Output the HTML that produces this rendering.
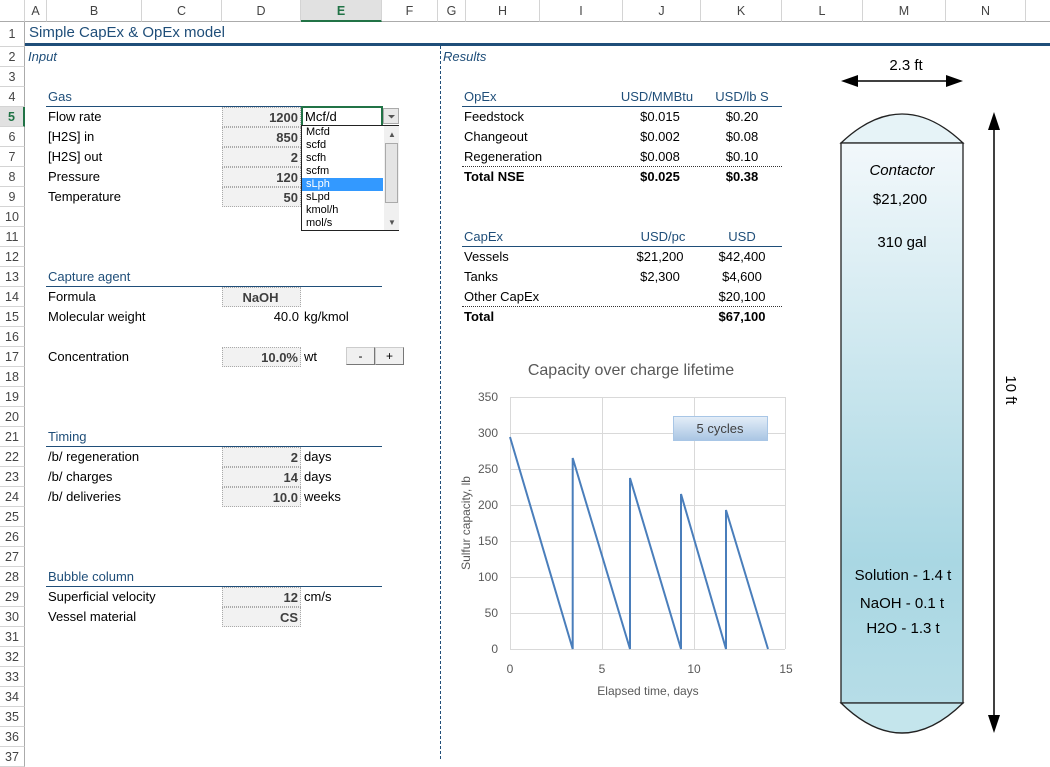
<!DOCTYPE html>
<html><head><meta charset="utf-8"><style>
*{margin:0;padding:0;box-sizing:border-box}
body{width:1050px;height:759px;overflow:hidden;background:#fff;font-family:"Liberation Sans",sans-serif;font-size:13px;color:#000;position:relative}
.a{position:absolute;white-space:nowrap}
.ch{position:absolute;top:0;height:22px;line-height:22px;text-align:center;color:#444;font-size:12.5px;border-right:1px solid #d4d4d4;border-bottom:1px solid #ababab;background:#fff}
.rh{position:absolute;left:0;width:25px;height:20px;line-height:20px;text-align:center;color:#444;font-size:12.5px;border-bottom:1px solid #d4d4d4;border-right:1px solid #ababab;background:#fff}
.t{position:absolute;height:20px;line-height:20px;white-space:nowrap}
.in{position:absolute;left:222px;width:79px;height:20px;line-height:20px;background:#f2f2f2;border:1px dotted #aaa;text-align:right;padding-right:2px;font-weight:bold;color:#3f3f3f}
.sec{color:#1f4e79;border-bottom:1px solid #1f4e79}
.c{text-align:center}
</style></head><body>
<!-- column headers -->
<div class="ch" style="left:0;width:25px;background:#fff"></div>
<div class="ch" style="left:25px;width:22px">A</div>
<div class="ch" style="left:47px;width:95px">B</div>
<div class="ch" style="left:142px;width:80px">C</div>
<div class="ch" style="left:222px;width:79px">D</div>
<div class="ch" style="left:301px;width:81px;background:#e1e1e1;color:#217346;font-weight:bold;border-bottom:2px solid #217346">E</div>
<div class="ch" style="left:382px;width:56px">F</div>
<div class="ch" style="left:438px;width:28px">G</div>
<div class="ch" style="left:466px;width:74px">H</div>
<div class="ch" style="left:540px;width:83px">I</div>
<div class="ch" style="left:623px;width:78px">J</div>
<div class="ch" style="left:701px;width:81px">K</div>
<div class="ch" style="left:782px;width:81px">L</div>
<div class="ch" style="left:863px;width:83px">M</div>
<div class="ch" style="left:946px;width:80px">N</div>
<div class="ch" style="left:1026px;width:24px;border-right:none"></div>
<!-- row headers -->
<div class="rh" style="top:22px;height:25px;line-height:24px">1</div>
<div id="rows"></div>
<script>
var h='';for(var n=2;n<=37;n++){var s=n==5?'background:#e1e1e1;color:#217346;font-weight:bold;border-right:2px solid #217346;':'';h+='<div class="rh" style="top:'+(7+20*n)+'px;'+s+'">'+n+'</div>';}document.getElementById('rows').innerHTML=h;
</script>
<!-- title -->
<div class="a" style="left:29px;top:24px;font-size:15px;color:#1f4e79">Simple CapEx &amp; OpEx model</div>
<div class="a" style="left:25px;top:43px;width:1025px;height:3px;background:#1f4e79"></div>
<div class="a" style="left:440px;top:46px;height:713px;border-left:1.5px dashed #1f4e79"></div>
<div class="t" style="left:28px;top:47px;font-style:italic;color:#1f4e79">Input</div>
<div class="t" style="left:443px;top:47px;font-style:italic;color:#1f4e79">Results</div>

<!-- Input section -->
<div class="t sec" style="left:46px;top:87px;width:336px;padding-left:2px">Gas</div>
<div class="t" style="left:48px;top:107px">Flow rate</div>
<div class="in" style="top:107px">1200</div>
<div class="t" style="left:301px;top:106px;width:82px;height:21px;border:2px solid #217346;padding-left:2px;line-height:18px">Mcf/d</div>
<div class="a" style="left:383px;top:108px;width:16px;height:16px;background:#e8e8e8;border:1px solid #aaa"><svg width="14" height="14" style="position:absolute;left:0;top:0"><path d="M4 6h7l-3.5 3.5z" fill="#555"/></svg></div>
<div class="t" style="left:48px;top:127px">[H2S] in</div><div class="in" style="top:127px">850</div>
<div class="t" style="left:48px;top:147px">[H2S] out</div><div class="in" style="top:147px">2</div>
<div class="t" style="left:48px;top:167px">Pressure</div><div class="in" style="top:167px">120</div>
<div class="t" style="left:48px;top:187px">Temperature</div><div class="in" style="top:187px">50</div>
<!-- dropdown -->
<div class="a" style="left:301px;top:125px;width:98px;height:106px;background:#fff;border:1px solid #222;font-size:11px;line-height:13px">
<div style="padding-left:4px;width:81px">Mcfd</div>
<div style="padding-left:4px;width:81px">scfd</div>
<div style="padding-left:4px;width:81px">scfh</div>
<div style="padding-left:4px;width:81px">scfm</div>
<div style="padding-left:4px;width:81px;background:#3399ff;color:#fff">sLph</div>
<div style="padding-left:4px;width:81px">sLpd</div>
<div style="padding-left:4px;width:81px">kmol/h</div>
<div style="padding-left:4px;width:81px">mol/s</div>
<div class="a" style="left:82px;top:0;width:15px;height:104px;background:#f0f0f0"></div>
<div class="a" style="left:83px;top:17px;width:13px;height:60px;background:#e4e4e4;border:1px solid #aaa"></div>
<div class="a" style="left:86px;top:2px;font-size:8px;color:#555">▲</div>
<div class="a" style="left:86px;top:90px;font-size:8px;color:#555">▼</div>
</div>

<div class="t sec" style="left:46px;top:267px;width:336px;padding-left:2px">Capture agent</div>
<div class="t" style="left:48px;top:287px">Formula</div><div class="in c" style="top:287px;text-align:center">NaOH</div>
<div class="t" style="left:48px;top:307px">Molecular weight</div>
<div class="t" style="left:222px;top:307px;width:79px;text-align:right;padding-right:2px">40.0</div>
<div class="t" style="left:304px;top:307px">kg/kmol</div>
<div class="t" style="left:48px;top:347px">Concentration</div><div class="in" style="top:347px">10.0%</div>
<div class="t" style="left:304px;top:347px">wt</div>
<div class="a" style="left:346px;top:347px;width:29px;height:18px;background:#f0f0f0;border:1px solid #ccc;border-right-color:#777;border-bottom-color:#777;text-align:center;line-height:16px;font-size:12px">-</div>
<div class="a" style="left:375px;top:347px;width:29px;height:18px;background:#f0f0f0;border:1px solid #ccc;border-right-color:#777;border-bottom-color:#777;text-align:center;line-height:16px;font-size:12px">+</div>

<div class="t sec" style="left:46px;top:427px;width:336px;padding-left:2px">Timing</div>
<div class="t" style="left:48px;top:447px">/b/ regeneration</div><div class="in" style="top:447px">2</div><div class="t" style="left:304px;top:447px">days</div>
<div class="t" style="left:48px;top:467px">/b/ charges</div><div class="in" style="top:467px">14</div><div class="t" style="left:304px;top:467px">days</div>
<div class="t" style="left:48px;top:487px">/b/ deliveries</div><div class="in" style="top:487px">10.0</div><div class="t" style="left:304px;top:487px">weeks</div>

<div class="t sec" style="left:46px;top:567px;width:336px;padding-left:2px">Bubble column</div>
<div class="t" style="left:48px;top:587px">Superficial velocity</div><div class="in" style="top:587px">12</div><div class="t" style="left:304px;top:587px">cm/s</div>
<div class="t" style="left:48px;top:607px">Vessel material</div><div class="in" style="top:607px">CS</div>

<!-- OpEx -->
<div class="t sec" style="left:462px;top:87px;width:320px;padding-left:2px">OpEx</div>
<div class="t c" style="left:612px;top:87px;width:90px;color:#1f4e79">USD/MMBtu</div>
<div class="t c" style="left:702px;top:87px;width:80px;color:#1f4e79">USD/lb S</div>
<div class="t" style="left:464px;top:107px">Feedstock</div><div class="t c" style="left:620px;top:107px;width:80px">$0.015</div><div class="t c" style="left:702px;top:107px;width:80px">$0.20</div>
<div class="t" style="left:464px;top:127px">Changeout</div><div class="t c" style="left:620px;top:127px;width:80px">$0.002</div><div class="t c" style="left:702px;top:127px;width:80px">$0.08</div>
<div class="t" style="left:464px;top:147px">Regeneration</div><div class="t c" style="left:620px;top:147px;width:80px">$0.008</div><div class="t c" style="left:702px;top:147px;width:80px">$0.10</div>
<div class="a" style="left:462px;top:166px;width:320px;border-top:1px dotted #333"></div>
<div class="t" style="left:464px;top:167px;font-weight:bold">Total NSE</div><div class="t c" style="left:620px;top:167px;width:80px;font-weight:bold">$0.025</div><div class="t c" style="left:702px;top:167px;width:80px;font-weight:bold">$0.38</div>
<!-- CapEx -->
<div class="t sec" style="left:462px;top:227px;width:320px;padding-left:2px">CapEx</div>
<div class="t c" style="left:623px;top:227px;width:80px;color:#1f4e79">USD/pc</div>
<div class="t c" style="left:702px;top:227px;width:80px;color:#1f4e79">USD</div>
<div class="t" style="left:464px;top:247px">Vessels</div><div class="t c" style="left:620px;top:247px;width:80px">$21,200</div><div class="t c" style="left:702px;top:247px;width:80px">$42,400</div>
<div class="t" style="left:464px;top:267px">Tanks</div><div class="t c" style="left:620px;top:267px;width:80px">$2,300</div><div class="t c" style="left:702px;top:267px;width:80px">$4,600</div>
<div class="t" style="left:464px;top:287px">Other CapEx</div><div class="t c" style="left:702px;top:287px;width:80px">$20,100</div>
<div class="a" style="left:462px;top:306px;width:320px;border-top:1px dotted #333"></div>
<div class="t" style="left:464px;top:307px;font-weight:bold">Total</div><div class="t c" style="left:702px;top:307px;width:80px;font-weight:bold">$67,100</div>

<!-- chart -->
<svg class="a" style="left:450px;top:350px" width="350" height="360" font-family="Liberation Sans, sans-serif">
<text x="181" y="25" font-size="16" fill="#595959" text-anchor="middle">Capacity over charge lifetime</text>
<g stroke="#d9d9d9" stroke-width="1">
<line x1="60" y1="47.5" x2="335" y2="47.5"/><line x1="60" y1="83.5" x2="335" y2="83.5"/><line x1="60" y1="119.5" x2="335" y2="119.5"/><line x1="60" y1="155.5" x2="335" y2="155.5"/><line x1="60" y1="191.5" x2="335" y2="191.5"/><line x1="60" y1="227.5" x2="335" y2="227.5"/><line x1="60" y1="263.5" x2="335" y2="263.5"/><line x1="60" y1="299.5" x2="335" y2="299.5"/>
<line x1="60.5" y1="47" x2="60.5" y2="299"/><line x1="152.5" y1="47" x2="152.5" y2="299"/><line x1="244.5" y1="47" x2="244.5" y2="299"/><line x1="335.5" y1="47" x2="335.5" y2="299"/>
</g>
<g font-size="12" fill="#595959" text-anchor="end">
<text x="48" y="51">350</text><text x="48" y="87">300</text><text x="48" y="123">250</text><text x="48" y="159">200</text><text x="48" y="195">150</text><text x="48" y="231">100</text><text x="48" y="267">50</text><text x="48" y="303">0</text>
</g>
<g font-size="12" fill="#595959" text-anchor="middle">
<text x="60" y="323">0</text><text x="152" y="323">5</text><text x="244" y="323">10</text><text x="336" y="323">15</text>
<text x="198" y="345">Elapsed time, days</text>
<text transform="translate(20,173) rotate(-90)">Sulfur capacity, lb</text>
</g>
<polyline fill="none" stroke="#4a7ebb" stroke-width="2" points="60,87 122.7,299 122.7,108 180,299 180,128 231,299 231,144 276,299 276,160 318,299"/>
<defs><linearGradient id="bx" x1="0" y1="0" x2="0" y2="1"><stop offset="0" stop-color="#e4eef8"/><stop offset="1" stop-color="#a9c5e3"/></linearGradient></defs>
<rect x="223.5" y="66.5" width="94" height="24" fill="url(#bx)" stroke="#a8c6e6"/>
<text x="270" y="83" font-size="13" fill="#404040" text-anchor="middle">5 cycles</text>
</svg>

<!-- vessel -->
<svg class="a" style="left:820px;top:50px" width="230" height="709" font-family="Liberation Sans, sans-serif">
<defs>
<linearGradient id="vg" x1="0" y1="0" x2="0" y2="1"><stop offset="0" stop-color="#f2f8fb"/><stop offset="0.75" stop-color="#a9d7e3"/><stop offset="1" stop-color="#b6dde7"/></linearGradient>
</defs>
<path d="M21 93 Q82 35 143 93 Z" fill="#e6f3f7" stroke="#222" stroke-width="1.3"/>
<rect x="21" y="93" width="122" height="560" fill="url(#vg)" stroke="#222" stroke-width="1.3"/>
<path d="M21 653 Q82 713 143 653 Z" fill="#c4e5ec" stroke="#222" stroke-width="1.3"/>
<text x="82" y="125" font-size="15" font-style="italic" text-anchor="middle" fill="#000">Contactor</text>
<text x="80" y="154" font-size="15" text-anchor="middle">$21,200</text>
<text x="82" y="197" font-size="15" text-anchor="middle">310 gal</text>
<text x="83" y="530" font-size="15" text-anchor="middle">Solution - 1.4 t</text>
<text x="82" y="558" font-size="15" text-anchor="middle">NaOH - 0.1 t</text>
<text x="83" y="583" font-size="15" text-anchor="middle">H2O - 1.3 t</text>
<text x="86" y="20" font-size="15" text-anchor="middle">2.3 ft</text>
<line x1="36" y1="31" x2="128" y2="31" stroke="#000" stroke-width="1.5"/>
<path d="M21 31 L38 25 L38 37 Z M143 31 L126 25 L126 37 Z" fill="#000"/>
<line x1="174" y1="78" x2="174" y2="670" stroke="#000" stroke-width="1.5"/>
<path d="M174 62 L168 80 L180 80 Z M174 683 L168 665 L180 665 Z" fill="#000"/>
<text transform="translate(186,340) rotate(90)" font-size="15" text-anchor="middle">10 ft</text>
</svg>
</body></html>
